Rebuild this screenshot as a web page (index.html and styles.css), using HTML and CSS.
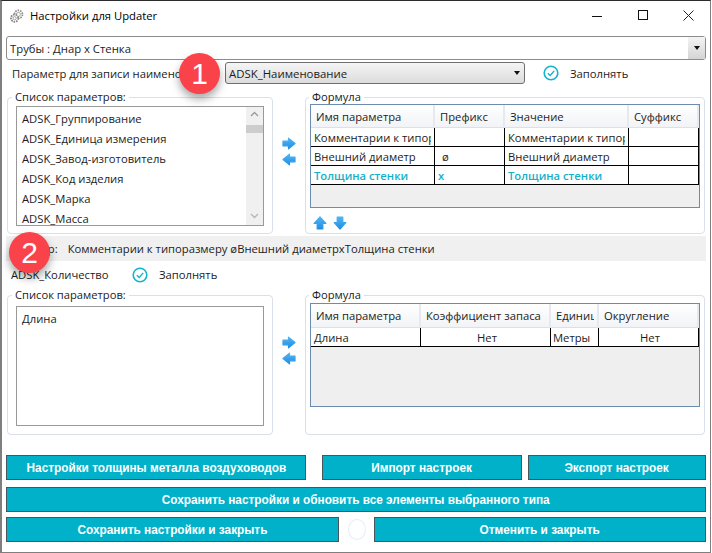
FILE: index.html
```html
<!DOCTYPE html>
<html lang="ru">
  <head>
    <meta charset="UTF-8" />
    <title>Настройки для Updater</title>
    <link rel="stylesheet" href="styles.css">
  </head>

  <body>
    <svg class="defs" width="0" height="0">
      <defs>
        <linearGradient id="blue" x1="0" y1="0" x2="0" y2="1">
          <stop offset="0" stop-color="#4fb4f2" />
          <stop offset="1" stop-color="#1f8fe6" />
        </linearGradient>
        <symbol id="arrow-right" viewBox="0 0 14 13">
          <path d="M1 4.2H6.5V1.2L13 6.5L6.5 11.8V8.8H1Z" fill="url(#blue)" stroke="url(#blue)" stroke-width="1.2" stroke-linejoin="round" />
        </symbol>
        <symbol id="arrow-left" viewBox="0 0 14 13">
          <path d="M13 4.2H7.5V1.2L1 6.5L7.5 11.8V8.8H13Z" fill="url(#blue)" stroke="url(#blue)" stroke-width="1.2" stroke-linejoin="round" />
        </symbol>
        <symbol id="arrow-up" viewBox="0 0 14 14">
          <path d="M4.2 13V7.5H1.2L7 1L12.8 7.5H9.8V13Z" fill="url(#blue)" stroke="url(#blue)" stroke-width="1.2" stroke-linejoin="round" />
        </symbol>
        <symbol id="arrow-down" viewBox="0 0 14 14">
          <path d="M4.2 1V6.5H1.2L7 13L12.8 6.5H9.8V1Z" fill="url(#blue)" stroke="url(#blue)" stroke-width="1.2" stroke-linejoin="round" />
        </symbol>
        <symbol id="check" viewBox="0 0 16 16">
          <circle cx="8" cy="8" r="6.8" fill="none" stroke="#14b4cc" stroke-width="1.6" />
          <path d="M4.8 8.2L7.2 10.4L11.2 5.9" fill="none" stroke="#14b4cc" stroke-width="1.4" />
        </symbol>
      </defs>
    </svg>

    <div class="window">
      <div class="titlebar">
        <svg class="app-icon" viewBox="0 0 14 14" width="14" height="14">
          <circle cx="8.4" cy="5.4" r="4" fill="none" stroke="#8f8f8f" stroke-width="1.8" stroke-dasharray="1.6 0.9" />
          <circle cx="8.4" cy="5.4" r="2" fill="none" stroke="#a5a5a5" stroke-width="1" />
          <circle cx="4.6" cy="9.2" r="3.6" fill="#fff" stroke="#858585" stroke-width="1.8" stroke-dasharray="1.6 0.9" />
          <circle cx="4.6" cy="9.2" r="1.6" fill="none" stroke="#a0a0a0" stroke-width="1" />
        </svg>
        <span class="title">Настройки для Updater</span>
        <div class="controls">
          <svg viewBox="0 0 46 20" width="46" height="20"><path d="M20 10.5H30" stroke="#111" fill="none" /></svg>
          <svg viewBox="0 0 46 20" width="46" height="20"><rect x="20.5" y="4.5" width="9" height="9" stroke="#111" fill="none" /></svg>
          <svg viewBox="0 0 46 20" width="46" height="20"><path d="M19.5 4.5L29.5 14.5M29.5 4.5L19.5 14.5" stroke="#222" fill="none" /></svg>
        </div>
      </div>

      <div class="combo combo-type">
        <span>Трубы : Днар х Стенка</span>
        <span class="combo-btn"><i class="caret"></i></span>
      </div>

      <div class="param-row">
        <span class="param-label">Параметр для записи наименования</span>
        <div class="combo combo-param">
          <span>ADSK_Наименование</span>
          <i class="caret"></i>
        </div>
        <label class="fill fill-top">
          <svg width="16" height="16"><use href="#check" /></svg>
          <span>Заполнять</span>
        </label>
      </div>

      <div class="panels panels-top">
        <fieldset class="group">
          <legend>Список параметров:</legend>
          <div class="listbox">
            <ul class="items">
              <li>ADSK_Группирование</li>
              <li>ADSK_Единица измерения</li>
              <li>ADSK_Завод-изготовитель</li>
              <li>ADSK_Код изделия</li>
              <li>ADSK_Марка</li>
              <li>ADSK_Масса</li>
            </ul>
            <div class="scrollbar">
              <svg width="17" height="14"><path d="M5 9L8.5 5.5L12 9" fill="none" stroke="#9a9a9a" stroke-width="1.3" /></svg>
              <div class="thumb"></div>
              <svg class="scroll-down" width="17" height="14"><path d="M5 5L8.5 8.5L12 5" fill="none" stroke="#b5b5b5" stroke-width="1.3" /></svg>
            </div>
          </div>
        </fieldset>

        <div class="movers">
          <svg width="14" height="13"><use href="#arrow-right" /></svg>
          <svg width="14" height="13"><use href="#arrow-left" /></svg>
        </div>

        <fieldset class="group group-formula">
          <legend>Формула</legend>
          <div class="grid-box grid-box-top">
            <table class="formula formula-top">
              <thead>
                <tr><th>Имя параметра</th><th>Префикс</th><th>Значение</th><th>Суффикс</th></tr>
              </thead>
              <tbody>
                <tr><td><span class="clip">Комментарии к типоразмеру</span></td><td></td><td><span class="clip">Комментарии к типоразмеру</span></td><td></td></tr>
                <tr><td>Внешний диаметр</td><td class="prefix">ø</td><td>Внешний диаметр</td><td></td></tr>
                <tr class="active"><td>Толщина стенки</td><td>х</td><td>Толщина стенки</td><td></td></tr>
              </tbody>
            </table>
          </div>
          <div class="order">
            <svg width="14" height="14"><use href="#arrow-up" /></svg>
            <svg width="14" height="14"><use href="#arrow-down" /></svg>
          </div>
        </fieldset>
      </div>

      <div class="sample">
        <span class="sample-label">Пример:</span>
        <span>Комментарии к типоразмеру øВнешний диаметрхТолщина стенки</span>
      </div>

      <div class="qty-row">
        <span class="qty-label">ADSK_Количество</span>
        <label class="fill">
          <svg width="16" height="16"><use href="#check" /></svg>
          <span>Заполнять</span>
        </label>
      </div>

      <div class="panels panels-bottom">
        <fieldset class="group">
          <legend>Список параметров:</legend>
          <div class="listbox">
            <ul class="items">
              <li>Длина</li>
            </ul>
          </div>
        </fieldset>

        <div class="movers">
          <svg width="14" height="13"><use href="#arrow-right" /></svg>
          <svg width="14" height="13"><use href="#arrow-left" /></svg>
        </div>

        <fieldset class="group group-formula">
          <legend>Формула</legend>
          <div class="grid-box grid-box-bottom">
            <table class="formula formula-bottom">
              <thead>
                <tr><th>Имя параметра</th><th>Коэффициент запаса</th><th><span class="clip">Единицы</span></th><th>Округление</th></tr>
              </thead>
              <tbody>
                <tr><td>Длина</td><td class="center">Нет</td><td>Метры</td><td class="center">Нет</td></tr>
              </tbody>
            </table>
          </div>
        </fieldset>
      </div>

      <div class="actions">
        <div class="btn-row">
          <button class="btn btn-metal"><span class="btn-text">Настройки толщины металла воздуховодов</span></button>
          <button class="btn btn-import"><span class="btn-text">Импорт настроек</span></button>
          <button class="btn btn-export"><span class="btn-text">Экспорт настроек</span></button>
        </div>
        <div class="btn-row">
          <button class="btn btn-wide"><span class="btn-text">Сохранить настройки и обновить все элементы выбранного типа</span></button>
        </div>
        <div class="btn-row btn-row-last">
          <button class="btn btn-save"><span class="btn-text">Сохранить настройки и закрыть</span></button>
          <div class="spinner"></div>
          <button class="btn btn-cancel"><span class="btn-text">Отменить и закрыть</span></button>
        </div>
      </div>

      <div class="badge badge-one">1</div>
      <div class="badge badge-two">2</div>
    </div>
  </body>
</html>
```

FILE: styles.css
```css
* {
  box-sizing: border-box;
}

body {
  margin: 0;
  background: #fff;
  font-family: "Open Sans", "Noto Sans", sans-serif;
  font-size: 11.25px;
  color: #1c1c1c;
}

.defs {
  position: absolute;
}

.window {
  position: relative;
  width: 711px;
  height: 553px;
  background: #fff;
  border-top: 1px solid #2b2b2b;
  border-left: 2px solid #7f7f7f;
  border-right: 1px solid #7f7f7f;
  border-bottom: 1px solid #7f7f7f;
  overflow: hidden;
}

/* title bar */
.titlebar {
  display: flex;
  align-items: center;
  height: 29px;
  padding-left: 8px;
}

.app-icon {
  margin-right: 6px;
}

.title {
  color: #000;
}

.controls {
  display: flex;
  align-self: flex-start;
  margin-left: auto;
  margin-top: 5px;
}

/* combos */
.combo {
  display: flex;
  align-items: center;
  border: 1px solid #8c8c8c;
  border-radius: 3px;
}

.combo-type {
  position: relative;
  height: 24px;
  margin: 6px 4px 0 4px;
  padding-left: 3px;
  background: #fff;
  font-size: 11.3px;
}

.combo-btn {
  display: flex;
  align-items: center;
  justify-content: center;
  width: 17px;
  height: 22px;
  margin-left: auto;
  background: linear-gradient(#f4f4f4, #d4d4d4);
}

.caret {
  display: block;
  border-top: 4px solid #111;
  border-left: 3.5px solid transparent;
  border-right: 3.5px solid transparent;
}

.param-row {
  display: flex;
  align-items: center;
  height: 22px;
  margin-top: 2px;
  padding-left: 10px;
}

.param-label {
  width: 213px;
  overflow: hidden;
  white-space: nowrap;
}

.combo-param {
  width: 300px;
  height: 22px;
  padding: 0 4px 0 3px;
  border-color: #6f6f6f;
  background: linear-gradient(#f5f5f5, #dcdcdc);
  font-size: 11.4px;
}

.combo-param .caret {
  margin-left: auto;
}

.fill {
  display: flex;
  align-items: center;
  gap: 11px;
}

.fill-top {
  margin-left: 18px;
}

/* panels */
.panels {
  display: grid;
  grid-template-columns: 266px 32px 400px;
  margin: 6px 0 0 5px;
}

.panels-bottom {
  grid-template-rows: 147px;
  margin-top: 0;
}

.group {
  min-width: 0;
  margin: 0;
  padding: 2px 8px 7px 8px;
  border: 1px solid #d8e0ea;
  border-radius: 4px;
}

.panels-bottom .group {
  padding-top: 4px;
}

.group legend {
  height: 14px;
  margin-left: -4px;
  padding: 0 3px;
  line-height: 14px;
  font-size: 11.2px;
}

.group-formula,
.panels-bottom .group-formula {
  padding: 0 4px 3px 4px;
}

.group-formula legend {
  margin-left: -1px;
}

.listbox {
  display: flex;
  height: 120px;
  border: 1px solid #999;
  overflow: hidden;
}

.items {
  flex: 1;
  margin: 0;
  padding: 2px 0 0 5px;
  list-style: none;
  font-size: 11.25px;
}

.items li {
  height: 20px;
  line-height: 20px;
  white-space: nowrap;
}

.scrollbar {
  display: flex;
  flex-direction: column;
  width: 17px;
  background: #f0f0f0;
}

.thumb {
  height: 8px;
  margin-top: 4px;
  background: #cdcdcd;
}

.scroll-down {
  margin-top: auto;
  margin-bottom: 2px;
}

.movers {
  display: flex;
  flex-direction: column;
  align-items: center;
  justify-content: center;
  gap: 3px;
  padding-bottom: 22px;
}

.grid-box {
  border: 1px solid #6b8bb0;
  background: #efefef;
}

.grid-box-top {
  height: 104px;
}

.grid-box-bottom {
  height: 104px;
  margin-top: 1px;
}

.formula {
  width: 388px;
  table-layout: fixed;
  border-collapse: separate;
  border-spacing: 0;
}

.formula th {
  height: 23px;
  padding: 0 0 0 5px;
  border-right: 2px solid #e6eaf0;
  border-bottom: 1px solid #dde1e7;
  background: linear-gradient(#fff, #f1f3f6);
  font-weight: 400;
  text-align: left;
  white-space: nowrap;
  overflow: hidden;
}

.formula-bottom th {
  height: 24px;
}

.formula td {
  height: 19px;
  padding: 0 0 0 3px;
  background: #fff;
  border-right: 1px solid #000;
  border-bottom: 1px solid #000;
  white-space: nowrap;
  overflow: hidden;
}

.clip {
  display: block;
  margin-right: 3px;
  overflow: hidden;
}

.formula-top th:nth-child(1),
.formula-top th:nth-child(3) {
  width: 124px;
}

.formula-top th:nth-child(2),
.formula-top th:nth-child(4) {
  width: 70px;
}

.formula-top td.prefix {
  padding-left: 7px;
}

.formula-bottom th:nth-child(1) {
  width: 110px;
}

.formula-bottom th:nth-child(2) {
  width: 130px;
}

.formula-bottom th:nth-child(3) {
  width: 48px;
}

.formula-bottom th:nth-child(4) {
  width: 100px;
}

.formula-bottom td:nth-child(3) {
  padding-left: 2px;
}

.formula td.center {
  text-align: center;
}

.active td {
  color: #14b0c8;
  font-weight: 600;
}

.order {
  display: flex;
  gap: 6px;
  height: 22px;
  padding: 8px 0 0 3px;
}

/* middle strip */
.sample {
  display: flex;
  align-items: center;
  gap: 10px;
  height: 25px;
  margin: 2px 4px 0 4px;
  padding-left: 5px;
  background: #f0f0f0;
}

.qty-row {
  display: flex;
  align-items: center;
  height: 27px;
  padding-left: 9px;
}

.qty-label {
  width: 121px;
}

/* buttons */
.actions {
  display: flex;
  flex-direction: column;
  gap: 7px;
  margin: 20px 4px 0 4px;
}

.btn-row {
  display: flex;
  justify-content: space-between;
}

.btn {
  height: 25px;
  padding: 0;
  border: 1px solid #47565e;
  background: #00b1c9;
  color: #fff;
  font-family: "Liberation Sans", sans-serif;
  font-size: 13.5px;
  font-weight: 700;
}

/* no condensed face installed, so the label is squeezed */
.btn-text {
  display: inline-block;
  white-space: nowrap;
  transform: scaleX(0.875);
}

.btn-metal {
  width: 300px;
}

.btn-import {
  width: 200px;
  margin-left: 16px;
}

.btn-export {
  width: 178px;
  margin-left: 6px;
}

.btn-wide {
  width: 100%;
}

.btn-save {
  width: 333px;
}

.btn-cancel {
  width: 332px;
}

.btn-row-last {
  align-items: center;
  margin-top: -2px;
}

.spinner {
  width: 18px;
  height: 21px;
  border: 1px solid #e6edf8;
  border-radius: 50%;
}

/* numbered callouts over the window */
.badge {
  position: absolute;
  display: flex;
  align-items: center;
  justify-content: center;
  width: 41px;
  height: 41px;
  border-radius: 50%;
  background: #f9424a;
  color: #fff;
  font-family: "Liberation Sans", sans-serif;
  font-size: 30px;
  box-shadow: 0 5px 9px rgba(0, 0, 0, 0.35);
}

.badge-one {
  left: 177px;
  top: 52px;
}

.badge-two {
  left: 7px;
  top: 231px;
}
```
